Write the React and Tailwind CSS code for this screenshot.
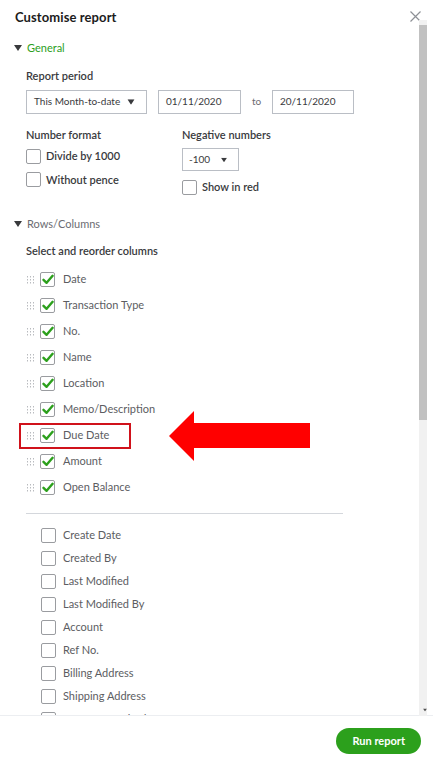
import React from 'react';

const SELECTED = [
  'Date',
  'Transaction Type',
  'No.',
  'Name',
  'Location',
  'Memo/Description',
  'Due Date',
  'Amount',
  'Open Balance',
];

const AVAILABLE = [
  'Create Date',
  'Created By',
  'Last Modified',
  'Last Modified By',
  'Account',
  'Ref No.',
  'Billing Address',
  'Shipping Address',
  'Payment Method',
];

function Caret({ className = '' }) {
  return (
    <svg className={className} width="8" height="6" viewBox="0 0 8 6">
      <path d="M0 0h8L4 6z" fill="currentColor" />
    </svg>
  );
}

function DragHandle() {
  return (
    <svg width="7" height="8" viewBox="0 0 7 8" className="text-[#b9bbbf]">
      {[0, 3, 6].map((y) =>
        [0, 3, 6].map((x) => <rect key={`${x}-${y}`} x={x} y={y} width="1" height="1.5" fill="currentColor" />)
      )}
    </svg>
  );
}

function Box({ checked }) {
  return (
    <span className="w-[15px] h-[15px] shrink-0 border border-[#9a9ca0] rounded-[2px] bg-white flex items-center justify-center">
      {checked && (
        <svg width="12" height="11" viewBox="0 0 12 11">
          <path d="M1.5 5.8 4.6 8.8 10.6 1.8" fill="none" stroke="#2ca01c" strokeWidth="2.4" strokeLinecap="round" strokeLinejoin="round" />
        </svg>
      )}
    </span>
  );
}

export default function App() {
  return (
    <div className="w-[433px] h-[766px] bg-white relative overflow-hidden text-[#393a3d]" style={{ fontFamily: 'Lato, "Open Sans", sans-serif' }}>
      {/* Scroll body */}
      <div className="h-[716px] overflow-hidden border-b border-[#eceef1]">
        <div className="flex items-center justify-between pl-[15px] pr-[12px] pt-[8px]">
          <h1 className="text-[13px] font-bold text-[#1c1c1c] tracking-[0.1px]">Customise report</h1>
          <svg width="11" height="11" viewBox="0 0 11 11" className="-mt-[2px]">
            <path d="M0.5 0.5 10.5 10.5M10.5 0.5 0.5 10.5" stroke="#8d9096" strokeWidth="1.2" />
          </svg>
        </div>

        {/* General */}
        <div className="flex items-center gap-[5px] pl-[14px] mt-[12px]">
          <Caret className="text-[#393a3d]" />
          <span className="text-[11px] text-[#2ca01c]">General</span>
        </div>

        <div className="pl-[26px] mt-[12px]">
          <div className="text-[11px] font-semibold text-[#393a3d]">Report period</div>
          <div className="flex items-center mt-[5px]">
            <div className="w-[121px] h-[24px] border border-[#babec5] flex items-center justify-between pl-[7px] pr-[11px]">
              <span className="text-[10px] text-[#393a3d]">This Month-to-date</span>
              <Caret className="text-[#393a3d] scale-90" />
            </div>
            <div className="w-[83px] h-[24px] border border-[#babec5] ml-[11px] flex items-center pl-[7px] text-[10px]">01/11/2020</div>
            <span className="text-[10px] text-[#6b6c72] w-[31px] text-center">to</span>
            <div className="w-[82px] h-[24px] border border-[#babec5] flex items-center pl-[7px] text-[10px]">20/11/2020</div>
          </div>

          <div className="flex mt-[13px]">
            <div className="w-[156px]">
              <div className="text-[11px] font-semibold">Number format</div>
              <label className="flex items-center gap-[5px] mt-[5px]">
                <Box />
                <span className="text-[11px] font-semibold">Divide by 1000</span>
              </label>
              <label className="flex items-center gap-[5px] mt-[7px]">
                <Box />
                <span className="text-[11px] font-semibold">Without pence</span>
              </label>
            </div>
            <div>
              <div className="text-[11px] font-semibold">Negative numbers</div>
              <div className="w-[57px] h-[23px] border border-[#babec5] mt-[5px] flex items-center justify-between pl-[6px] pr-[10px]">
                <span className="text-[10px]">-100</span>
                <Caret className="scale-75" />
              </div>
              <label className="flex items-center gap-[5px] mt-[8px]">
                <Box />
                <span className="text-[11px] font-semibold">Show in red</span>
              </label>
            </div>
          </div>
        </div>

        {/* Rows/Columns */}
        <div className="flex items-center gap-[5px] pl-[14px] mt-[20px]">
          <Caret className="text-[#393a3d]" />
          <span className="text-[11px] text-[#6b6c72]">Rows/Columns</span>
        </div>

        <div className="pl-[26px] mt-[11px]">
          <div className="text-[11px] font-semibold">Select and reorder columns</div>
          <ul className="mt-[7px]">
            {SELECTED.map((name) => (
              <li key={name} className="relative h-[26px] flex items-center">
                {name === 'Due Date' && (
                  <span className="absolute left-[-7px] top-[0px] w-[112px] h-[26px] border-2 border-[#d0121b]" />
                )}
                <span className="ml-[1px]"><DragHandle /></span>
                <span className="ml-[6px]"><Box checked /></span>
                <span className="ml-[8px] text-[11px] text-[#5c5d62]">{name}</span>
              </li>
            ))}
          </ul>
          <div className="w-[317px] h-px bg-[#d4d7dc] mt-[12px]" />
          <ul className="mt-[10px]">
            {AVAILABLE.map((name) => (
              <li key={name} className="h-[23px] flex items-center pl-[15px]">
                <Box />
                <span className="ml-[7px] text-[11px] text-[#5c5d62]">{name}</span>
              </li>
            ))}
          </ul>
        </div>
      </div>

      {/* Annotation arrow */}
      <svg className="absolute left-[169px] top-[410px]" width="142" height="52" viewBox="0 0 142 52">
        <path d="M0 26 25 1V13H141V38H25V51Z" fill="#ff0000" />
      </svg>

      {/* Scrollbar */}
      <div className="absolute left-[419px] top-[20px] w-[8px] h-[696px] bg-[#f1f1f1]">
        <div className="w-full h-[395px] mt-[5px] bg-[#c1c1c1]" />
      </div>
      <Caret className="absolute left-[421px] top-[707px] scale-50 text-[#505050]" />

      {/* Footer */}
      <div className="h-[50px] flex items-center justify-end pr-[12px]">
        <button className="h-[26px] px-[16px] rounded-full bg-[#2ca01c] text-white text-[11px] font-bold">
          Run report
        </button>
      </div>
    </div>
  );
}
